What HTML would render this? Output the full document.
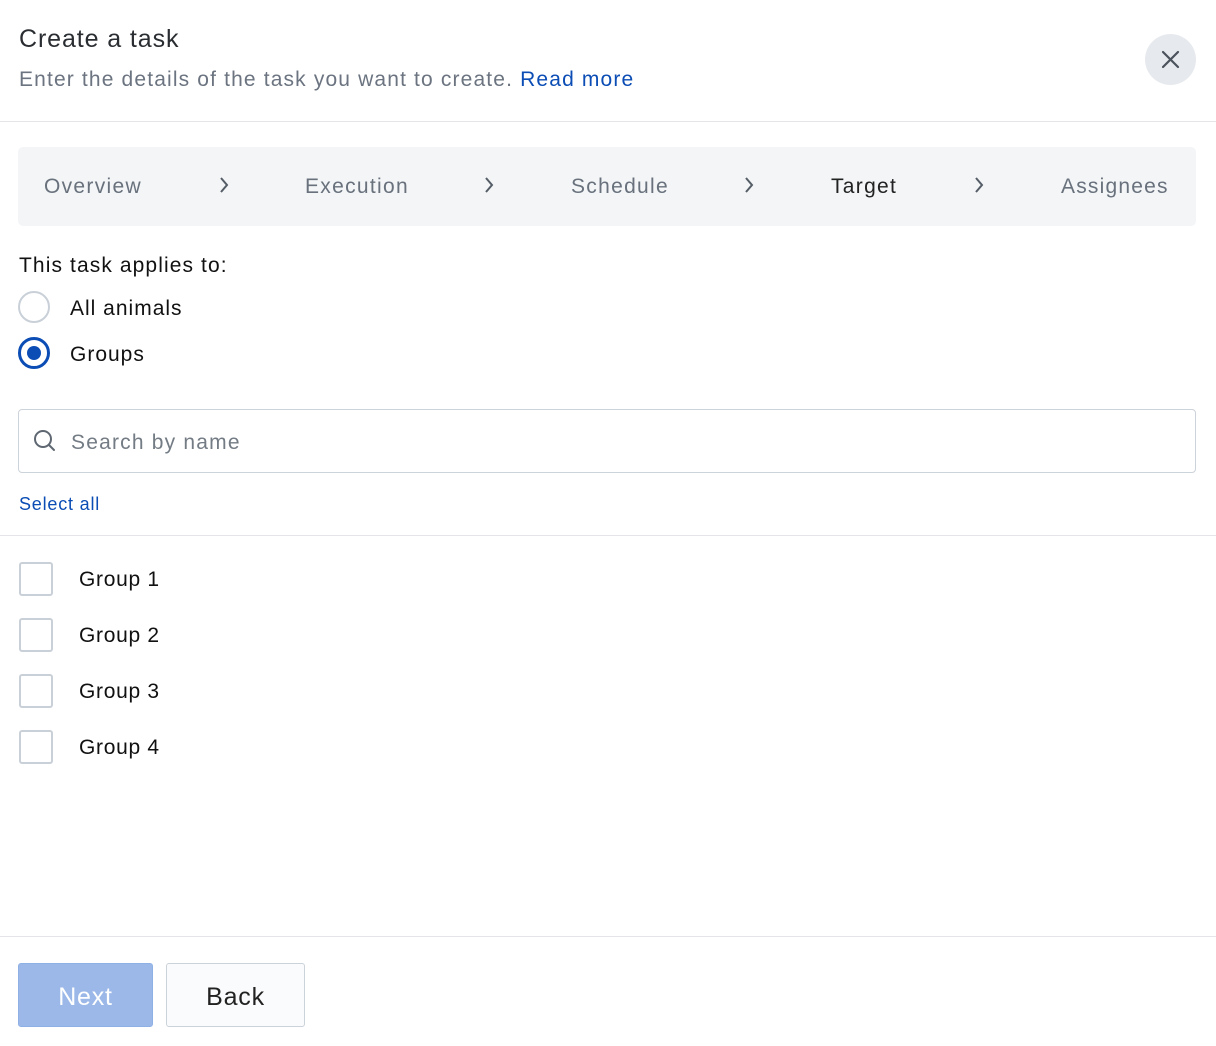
<!DOCTYPE html>
<html><head><meta charset="utf-8"><style>
*{box-sizing:border-box;margin:0;padding:0}
body{width:1216px;height:1046px;background:#fff;font-family:"Liberation Sans",sans-serif;position:relative;overflow:hidden;color:#1f2329}
.abs{position:absolute;white-space:nowrap}
.hr{position:absolute;left:0;width:1216px;height:1px;background:#e3e5e8}
.step{position:absolute;top:175px;font-size:21px;color:#68717c;letter-spacing:1.3px}
.chev{position:absolute;top:174px}
.cb{position:absolute;left:19px;width:34px;height:34px;border:2px solid #c9d0d8;border-radius:3px}
.gl{position:absolute;left:79px;font-size:21px;color:#111;letter-spacing:0.7px}
</style></head><body>
<div class="abs" style="left:19px;top:25px;font-size:25px;color:#2a2d31;letter-spacing:0.9px">Create a task</div>
<div class="abs" style="left:19px;top:68px;font-size:21px;color:#6b7480;letter-spacing:1.15px">Enter the details of the task you want to create. <span style="color:#0b4db5">Read more</span></div>
<div class="abs" style="left:1145px;top:34px;width:51px;height:51px;border-radius:50%;background:#e6e9ed"></div>
<svg class="abs" style="left:1160px;top:49px" width="21" height="21" viewBox="0 0 21 21"><path d="M3 3L18 18M18 3L3 18" stroke="#4a525c" stroke-width="2.2" stroke-linecap="round"/></svg>
<div class="hr" style="top:121px"></div>
<div class="abs" style="left:18px;top:147px;width:1178px;height:79px;background:#f3f5f7;border-radius:5px"></div>
<div class="step" style="left:44px">Overview</div>
<div class="step" style="left:305px">Execution</div>
<div class="step" style="left:571px">Schedule</div>
<div class="step" style="left:831px;color:#222">Target</div>
<div class="step" style="left:1061px;letter-spacing:1.2px">Assignees</div>
<svg class="chev" style="left:217px" width="14" height="22"><path d="M4 4l6 7-6 7" fill="none" stroke="#555d66" stroke-width="2"/></svg>
<svg class="chev" style="left:482px" width="14" height="22"><path d="M4 4l6 7-6 7" fill="none" stroke="#555d66" stroke-width="2"/></svg>
<svg class="chev" style="left:742px" width="14" height="22"><path d="M4 4l6 7-6 7" fill="none" stroke="#555d66" stroke-width="2"/></svg>
<svg class="chev" style="left:972px" width="14" height="22"><path d="M4 4l6 7-6 7" fill="none" stroke="#555d66" stroke-width="2"/></svg>
<div class="abs" style="left:19px;top:254px;font-size:21px;color:#111;letter-spacing:1.1px">This task applies to:</div>
<div class="abs" style="left:18px;top:291px;width:32px;height:32px;border-radius:50%;border:2px solid #c9d0d8"></div>
<div class="abs" style="left:70px;top:297px;font-size:21px;color:#111;letter-spacing:1px">All animals</div>
<div class="abs" style="left:18px;top:337px;width:32px;height:32px;border-radius:50%;border:3px solid #0b4db5"></div>
<div class="abs" style="left:27px;top:346px;width:14px;height:14px;border-radius:50%;background:#0b4db5"></div>
<div class="abs" style="left:70px;top:343px;font-size:21px;color:#111;letter-spacing:1px">Groups</div>
<div class="abs" style="left:18px;top:409px;width:1178px;height:64px;border:1px solid #cdd3da;border-radius:4px"></div>
<svg class="abs" style="left:32px;top:428px" width="26" height="26" viewBox="0 0 26 26"><circle cx="11" cy="11" r="8" fill="none" stroke="#5f6872" stroke-width="2"/><path d="M17 17l5 5" stroke="#5f6872" stroke-width="2" stroke-linecap="round"/></svg>
<div class="abs" style="left:71px;top:431px;font-size:21px;color:#737b84;letter-spacing:1.2px">Search by name</div>
<div class="abs" style="left:19px;top:494px;font-size:18px;color:#0b4db5;letter-spacing:0.8px">Select all</div>
<div class="hr" style="top:535px"></div>
<div class="cb" style="top:562px"></div><div class="gl" style="top:568px">Group 1</div>
<div class="cb" style="top:618px"></div><div class="gl" style="top:624px">Group 2</div>
<div class="cb" style="top:674px"></div><div class="gl" style="top:680px">Group 3</div>
<div class="cb" style="top:730px"></div><div class="gl" style="top:736px">Group 4</div>
<div class="hr" style="top:936px"></div>
<div class="abs" style="left:18px;top:963px;width:135px;height:64px;background:#9cb8e8;border:1px solid #8fb0e4;border-radius:3px;color:#fff;font-size:25px;text-align:center;line-height:66px;letter-spacing:0.8px">Next</div>
<div class="abs" style="left:166px;top:963px;width:139px;height:64px;background:#fafbfc;border:1px solid #ccd2d9;border-radius:3px;color:#222;font-size:25px;text-align:center;line-height:66px;letter-spacing:0.8px">Back</div>
</body></html>
